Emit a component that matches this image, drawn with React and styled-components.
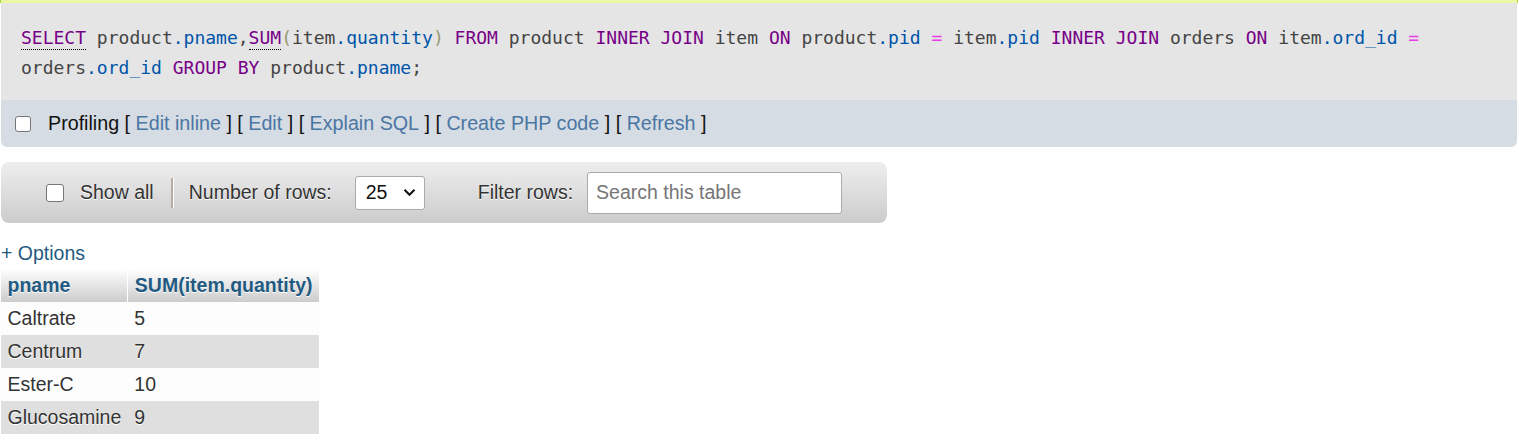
import React from "react";
import styled, { createGlobalStyle } from "styled-components";

const GlobalStyle = createGlobalStyle`
  body {
    margin: 0;
    background: #fff;
    font-family: "Liberation Sans", Arial, sans-serif;
    font-size: 19.5px;
    color: #444;
  }
`;

const Page = styled.div`
  width: 1518px;
`;

const SuccessEdge = styled.div`
  height: 3px;
  background: #ebf8a4;
  border-left: 1px solid #a2d246;
  border-right: 1px solid #a2d246;
`;

const QueryBox = styled.div`
  margin: 0 1px 0 1px;
`;

const SqlCode = styled.code`
  display: block;
  background: #e5e5e5;
  padding: 20px 20px 17px 20px;
  font-family: "DejaVu Sans Mono", "Liberation Mono", monospace;
  font-size: 18px;
  line-height: 30px;
  color: #444;
`;

const tokenColors = {
  kw: "#770088",
  var2: "#0055aa",
  op: "#e83ae8",
  br: "#999977",
  txt: "#444",
};

const Tok = styled.span`
  color: ${(p) => tokenColors[p.$k] || tokenColors.txt};
  ${(p) =>
    p.$doc &&
    `
    border-bottom: 1px dotted #000;
    padding-bottom: 1px;
  `}
`;

const Tools = styled.div`
  display: flex;
  align-items: center;
  height: 47px;
  padding-left: 14px;
  background: #d5dce3;
  border-radius: 0 0 6px 6px;
  color: #111;
  font-size: 19.7px;
  white-space: pre;
`;

const Check = styled.input.attrs({ type: "checkbox" })`
  appearance: none;
  margin: 0 ${(p) => p.$gap || 17}px 0 0;
  width: ${(p) => p.$size || 16}px;
  height: ${(p) => p.$size || 16}px;
  border: 1.5px solid #767676;
  border-radius: 3px;
  background: #fff;
  box-sizing: border-box;
  flex: none;
`;

const ToolLink = styled.a`
  color: #4a76a3;
  text-decoration: none;
`;

const Navigation = styled.div`
  display: flex;
  align-items: center;
  margin: 15px 0 0 1px;
  width: 886px;
  height: 61px;
  padding-left: 45px;
  box-sizing: border-box;
  border-radius: 8px;
  background: linear-gradient(#eeeeee, #cccccc);
  color: #333;
  text-shadow: 0 1px 0 #fff;
`;

const NavLabel = styled.span`
  margin-left: ${(p) => p.$left || 0}px;
  white-space: nowrap;
`;

const Separator = styled.span`
  width: 2px;
  height: 30px;
  margin-left: 17px;
  background: #b5aca4;
  box-shadow: 1px 0 0 #fff;
`;

const SelectBox = styled.div`
  display: flex;
  align-items: center;
  justify-content: space-between;
  margin-left: 23px;
  width: 70px;
  height: 34px;
  padding: 0 8px 0 10px;
  box-sizing: border-box;
  background: #fff;
  border: 1px solid #aaa;
  border-radius: 3px;
  color: #111;
  text-shadow: none;
`;

const SearchInput = styled.input`
  margin-left: 14px;
  width: 255px;
  height: 42px;
  box-sizing: border-box;
  padding: 0 8px;
  border: 1px solid #aaa;
  border-radius: 3px;
  background: #fff;
  font-family: "Liberation Sans", Arial, sans-serif;
  font-size: 19.5px;
  color: #333;
  outline: none;
  &::placeholder {
    color: #757575;
  }
`;

const Options = styled.a`
  display: block;
  margin: 19px 0 0 1px;
  line-height: 22px;
  color: #235a81;
  text-decoration: none;
`;

const DataTable = styled.table`
  margin: 5px 0 0 1px;
  border-collapse: collapse;
  font-size: 19.5px;
`;

const Th = styled.th`
  padding: 0 6.5px;
  height: 33px;
  text-align: left;
  font-weight: bold;
  color: #235a81;
  background: linear-gradient(#ffffff, #cccccc);
  text-shadow: 0 1px 0 #fff;
  border-right: 1px solid #fff;
  &:last-child {
    border-right: none;
  }
`;

const Tr = styled.tr`
  background: ${(p) => (p.$even ? "#dfdfdf" : "#fdfdfd")};
`;

const Td = styled.td`
  padding: 0 6.5px;
  height: 33px;
  color: #333;
  text-shadow: 0 1px 0 #fff;
`;

const Chevron = () => (
  <svg width="13" height="9" viewBox="0 0 13 9">
    <path d="M1.5 1.8 L6.5 6.8 L11.5 1.8" fill="none" stroke="#111" strokeWidth="2" />
  </svg>
);

const sql = [
  ["kw", "SELECT", true], ["txt", " product"], ["var2", ".pname"], ["txt", ","],
  ["kw", "SUM", true], ["br", "("], ["txt", "item"], ["var2", ".quantity"], ["br", ")"],
  ["txt", " "], ["kw", "FROM"], ["txt", " product "], ["kw", "INNER JOIN"], ["txt", " item "],
  ["kw", "ON"], ["txt", " product"], ["var2", ".pid"], ["txt", " "], ["op", "="],
  ["txt", " item"], ["var2", ".pid"], ["txt", " "], ["kw", "INNER JOIN"], ["txt", " orders "],
  ["kw", "ON"], ["txt", " item"], ["var2", ".ord_id"], ["txt", " "], ["op", "="],
  ["txt", " orders"], ["var2", ".ord_id"], ["txt", " "], ["kw", "GROUP BY"],
  ["txt", " product"], ["var2", ".pname"], ["txt", ";"],
];

const rows = [
  ["Caltrate", "5"],
  ["Centrum", "7"],
  ["Ester-C", "10"],
  ["Glucosamine", "9"],
];

export default function App() {
  return (
    <Page>
      <GlobalStyle />
      <SuccessEdge />
      <QueryBox>
        <SqlCode>
          {sql.map(([k, t, doc], i) => (
            <Tok key={i} $k={k} $doc={doc}>
              {t}
            </Tok>
          ))}
        </SqlCode>
        <Tools>
          <Check $size={16} $gap={17} />
          Profiling [ <ToolLink href="#">Edit inline</ToolLink> ] [ <ToolLink href="#">Edit</ToolLink> ] [{" "}
          <ToolLink href="#">Explain SQL</ToolLink> ] [ <ToolLink href="#">Create PHP code</ToolLink> ] [{" "}
          <ToolLink href="#">Refresh</ToolLink> ]
        </Tools>
      </QueryBox>
      <Navigation>
        <Check $size={18} $gap={16} />
        <NavLabel>Show all</NavLabel>
        <Separator />
        <NavLabel $left={16}>Number of rows:</NavLabel>
        <SelectBox>
          <span>25</span>
          <Chevron />
        </SelectBox>
        <NavLabel $left={53}>Filter rows:</NavLabel>
        <SearchInput placeholder="Search this table" />
      </Navigation>
      <Options href="#">+ Options</Options>
      <DataTable>
        <thead>
          <tr>
            <Th>pname</Th>
            <Th>SUM(item.quantity)</Th>
          </tr>
        </thead>
        <tbody>
          {rows.map((r, i) => (
            <Tr key={r[0]} $even={i % 2 === 1}>
              <Td>{r[0]}</Td>
              <Td>{r[1]}</Td>
            </Tr>
          ))}
        </tbody>
      </DataTable>
    </Page>
  );
}
